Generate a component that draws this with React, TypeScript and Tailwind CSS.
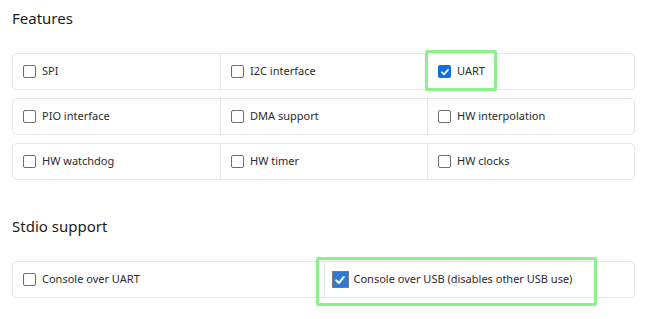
import React from "react";

const FONT = { fontFamily: '"Noto Sans", "Open Sans", sans-serif' };

function Box({ checked, big }: { checked?: boolean; big?: boolean }) {
  if (big) {
    return (
      <span className="flex h-[17px] w-[17px] shrink-0 items-center justify-center border border-[#7b7b7b] bg-[#2f79d0]">
        <svg viewBox="0 0 12 12" className="h-[12px] w-[12px]">
          <path d="M2.2 6.4 L4.8 9 L9.8 3" fill="none" stroke="white" strokeWidth="2" strokeLinecap="round" strokeLinejoin="round" />
        </svg>
      </span>
    );
  }
  if (checked) {
    return (
      <span className="flex h-[13px] w-[13px] shrink-0 items-center justify-center rounded-[2px] bg-[#0f6fe0]">
        <svg viewBox="0 0 12 12" className="h-[10px] w-[10px]">
          <path d="M2.2 6.3 L4.8 8.8 L9.8 3.2" fill="none" stroke="white" strokeWidth="2" strokeLinecap="round" strokeLinejoin="round" />
        </svg>
      </span>
    );
  }
  return <span className="h-[13px] w-[13px] shrink-0 rounded-[2px] border border-[#6e6e6e] bg-white" />;
}

function Cell({ label, checked, first }: { label: string; checked?: boolean; first?: boolean }) {
  return (
    <div className={`flex items-center gap-[6px] pl-[10px] ${first ? "" : "border-l border-[#e6e6e6]"}`}>
      <Box checked={checked} />
      <span className="text-[11px] text-[#2b2b2b]">{label}</span>
    </div>
  );
}

const rows: { label: string; checked?: boolean }[][] = [
  [{ label: "SPI" }, { label: "I2C interface" }, { label: "UART", checked: true }],
  [{ label: "PIO interface" }, { label: "DMA support" }, { label: "HW interpolation" }],
  [{ label: "HW watchdog" }, { label: "HW timer" }, { label: "HW clocks" }],
];

export default function App() {
  return (
    <div className="relative h-[319px] w-[659px] overflow-hidden bg-white" style={FONT}>
      <div className="pl-[12px] pr-[24px]">
        <h2 className="pt-[7px] text-[15px] leading-[22px] text-[#1b1b1b]">Features</h2>

        <div className="mt-[24px] flex flex-col gap-[8px]">
          {rows.map((r, i) => (
            <div key={i} className="grid h-[37px] grid-cols-3 rounded-[5px] border border-[#e6e6e6]">
              {r.map((c, j) => (
                <Cell key={c.label} label={c.label} checked={c.checked} first={j === 0} />
              ))}
            </div>
          ))}
        </div>

        <h2 className="mt-[35px] text-[15px] leading-[22px] text-[#1b1b1b]">Stdio support</h2>

        <div className="mt-[24px] grid h-[37px] grid-cols-2 rounded-[5px] border border-[#e6e6e6]">
          <Cell label="Console over UART" first />
          <div className="flex items-center gap-[5px] border-l border-[#e6e6e6] pl-[7px]">
            <Box big />
            <span className="text-[11px] text-[#2b2b2b]">Console over USB (disables other USB use)</span>
          </div>
        </div>
      </div>

      {/* highlight frames */}
      <div className="absolute left-[425px] top-[50px] h-[41px] w-[72px] rounded-[2px] border-[3px] border-[#8ef08a]" />
      <div className="absolute left-[316px] top-[257px] h-[49px] w-[281px] rounded-[2px] border-[3px] border-[#8ef08a]" />
    </div>
  );
}
